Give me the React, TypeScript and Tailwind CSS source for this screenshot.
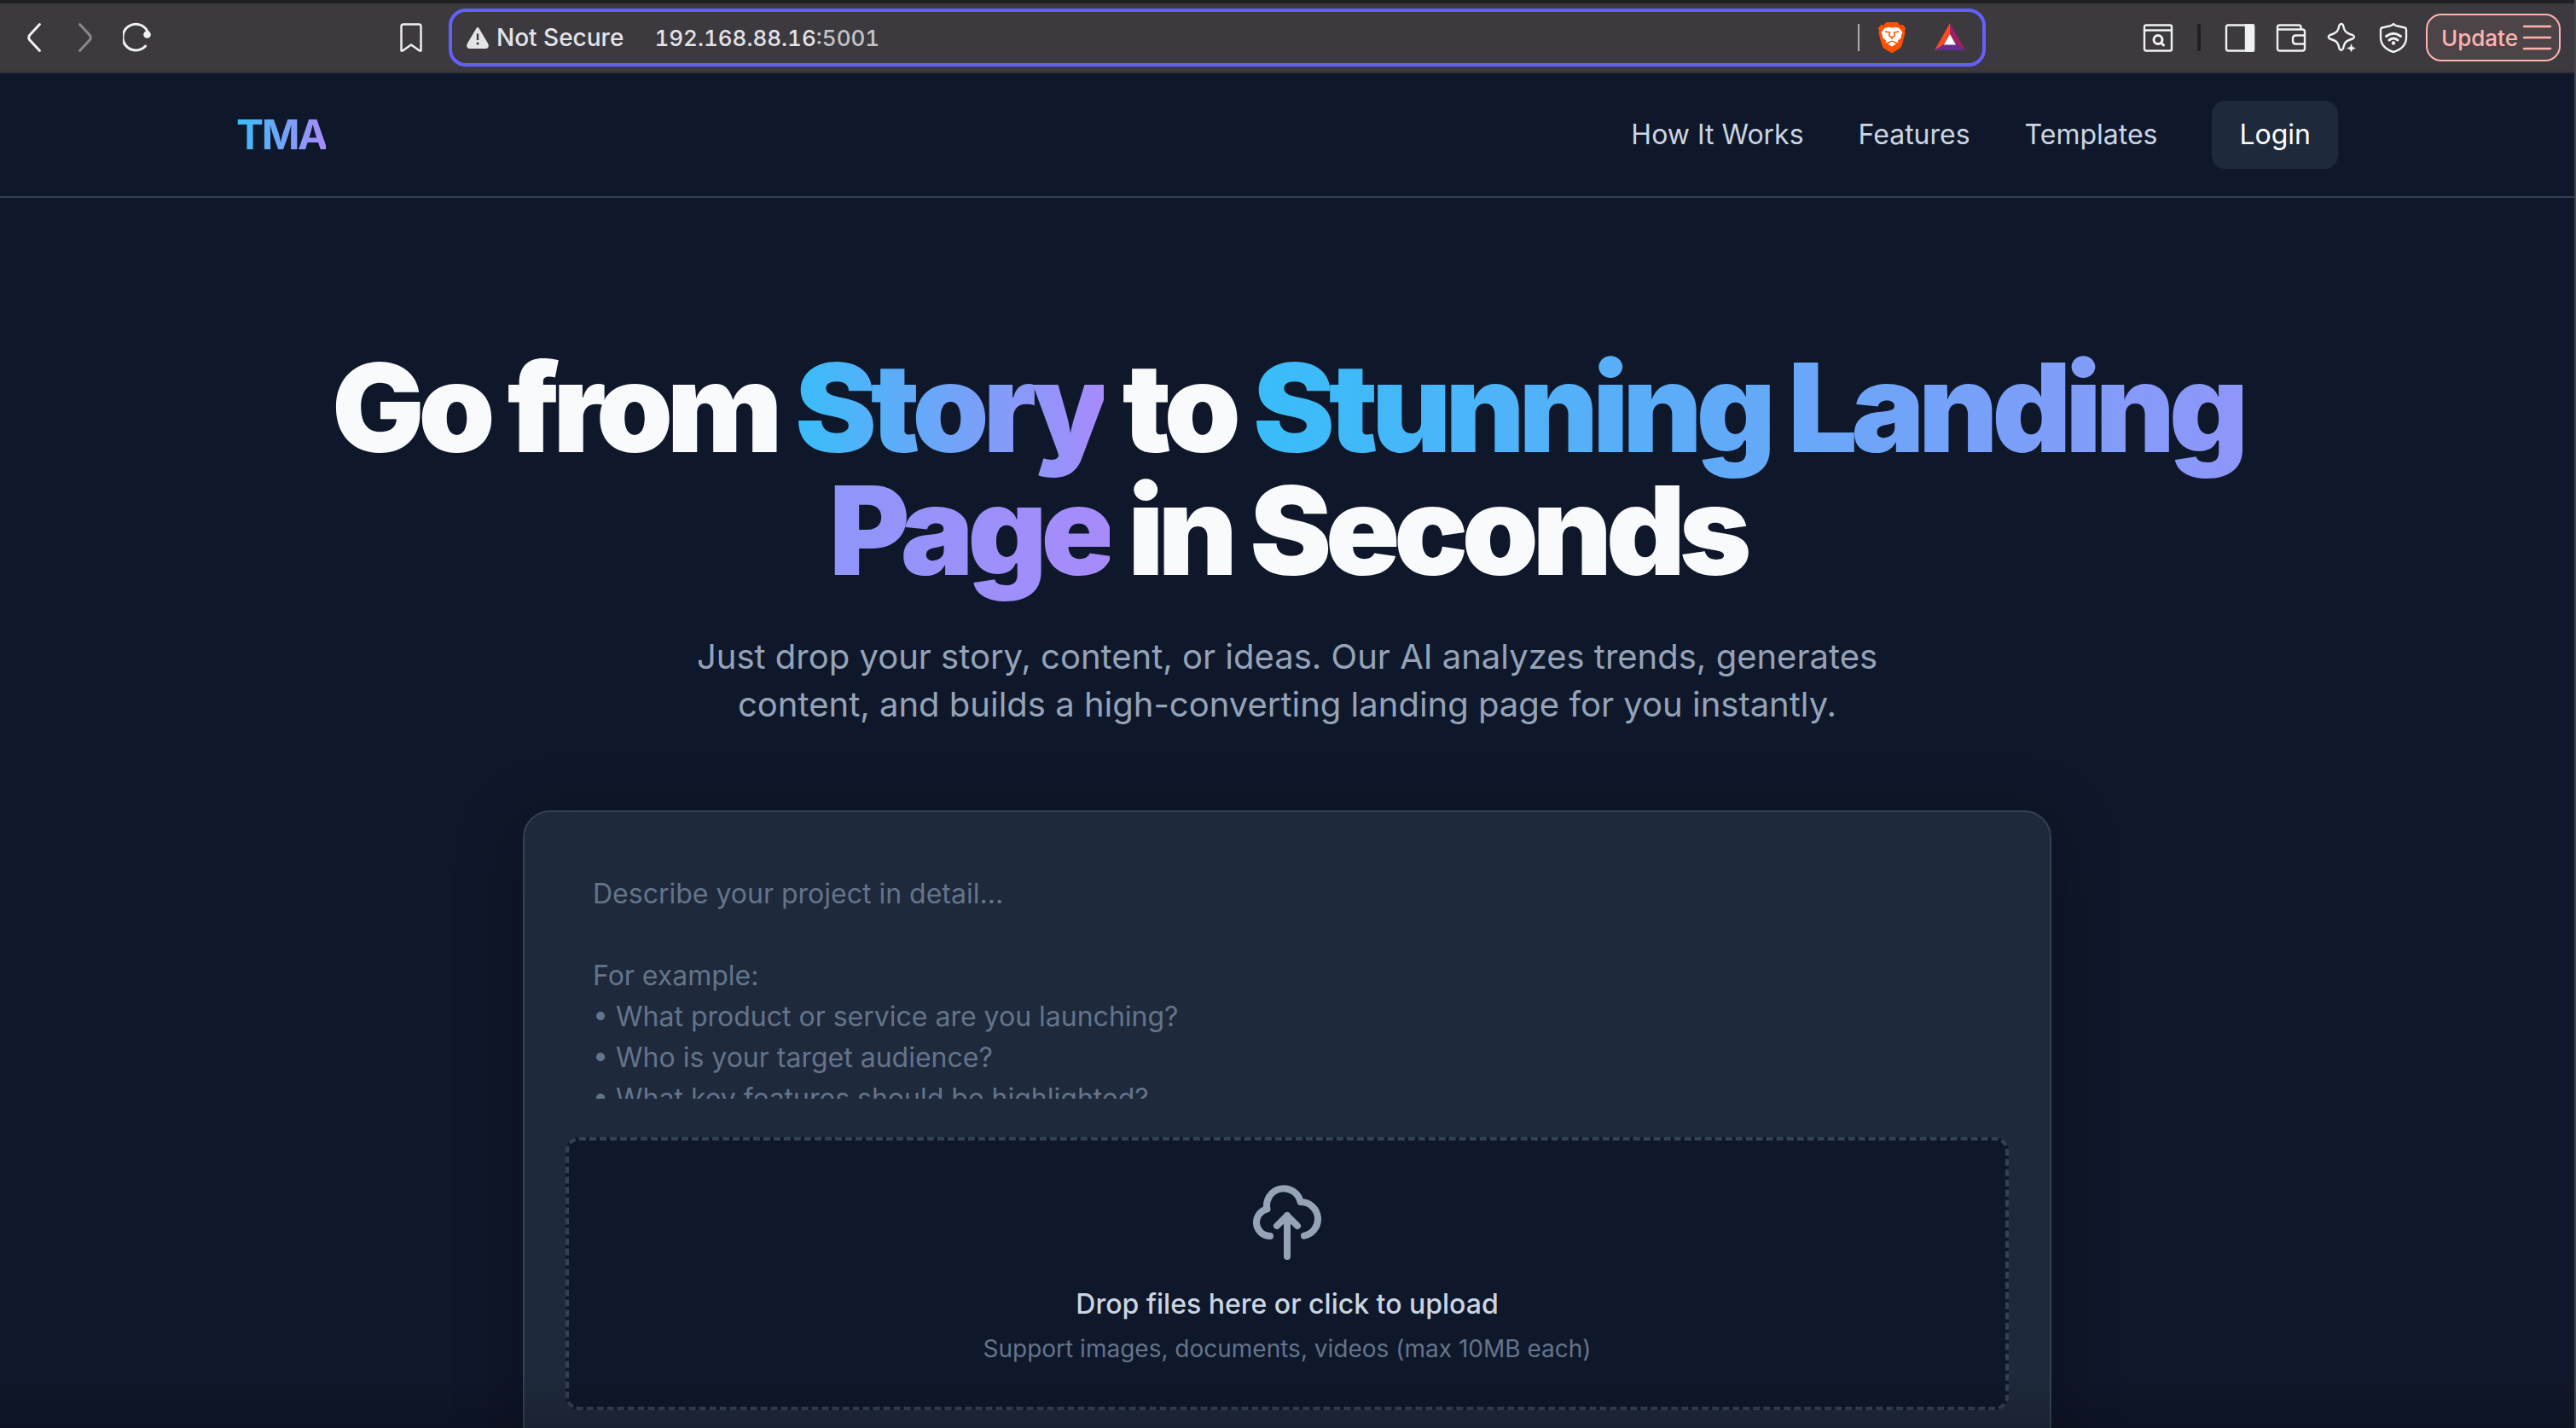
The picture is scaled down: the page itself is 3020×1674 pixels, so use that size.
import type { ReactNode } from "react";

const PLACEHOLDER = [
  "Describe your project in detail...",
  "",
  "For example:",
  "• What product or service are you launching?",
  "• Who is your target audience?",
  "• What key features should be highlighted?",
].join("\n");

function Icon({ children, className = "" }: { children: ReactNode; className?: string }) {
  return (
    <svg
      viewBox="0 0 36 36"
      className={`size-9 shrink-0 ${className}`}
      fill="none"
      stroke="currentColor"
      strokeWidth="2.4"
      strokeLinecap="round"
      strokeLinejoin="round"
      aria-hidden="true"
    >
      {children}
    </svg>
  );
}

function IconButton({ label, children }: { label: string; children: ReactNode }) {
  return (
    <button type="button" aria-label={label} className="flex shrink-0 items-center">
      {children}
    </button>
  );
}

function BrowserBar() {
  return (
    <div className="flex h-[86px] items-center border-t-4 border-b-2 border-t-[#1f1f23] border-b-[#2f2f34] bg-[#3c3a3f] text-[#f1f1f4]">
      <div className="flex w-[526px] shrink-0 items-center justify-between px-6">
        <div className="flex items-center gap-6">
          <IconButton label="Back">
            <Icon>
              <path d="M22.500 2.500 L10.500 15.500 Q9 18 10.500 20.500 L22.500 33.500" strokeWidth="3" />
            </Icon>
          </IconButton>
          <IconButton label="Forward">
            <Icon className="text-[#89888c]">
              <path d="M9.500 2.500 L21.500 15.500 Q23 18 21.500 20.500 L9.500 33.500" strokeWidth="3" />
            </Icon>
          </IconButton>
          <IconButton label="Reload">
            <Icon>
              <path d="M26.500 28 A15.300 15.300 0 1 1 29 11" strokeWidth="3" />
              <circle cx="28.500" cy="14.500" r="4.300" fill="currentColor" stroke="none" />
            </Icon>
          </IconButton>
        </div>
        <IconButton label="Bookmark">
          <Icon>
            <path d="M7 2.500 H25 Q27.500 2.500 27.500 5 V33.500 H26 L16 26.500 L6 33.500 H4.500 V5 Q4.500 2.500 7 2.500 Z" />
          </Icon>
        </IconButton>
      </div>

      <div className="flex h-[68px] w-[1802px] min-w-0 shrink items-center rounded-[20px] border-4 border-[#6360ff] pr-5 pl-4">
        <svg viewBox="0 0 28 28" className="mr-2 size-7 shrink-0" aria-hidden="true">
          <path d="M14 3.500 L25 22 Q26 25.500 23.500 25.500 H4.500 Q2 25.500 3 22 Z" fill="#e3e3e8" stroke="#e3e3e8" strokeWidth="3" strokeLinejoin="round" />
          <path d="M14 9.500 V17" stroke="#3c3a3f" strokeWidth="2.400" />
          <circle cx="14" cy="21" r="1.500" fill="#3c3a3f" />
        </svg>
        <span className="text-[28px] font-medium text-[#e3e3e8]">Not Secure</span>
        <span className="ml-9 flex-1 text-[26px] font-medium text-[#e3e3e8] tabular-nums">
          192.168.88.16<span className="text-[#c4c4c9]">:5001</span>
        </span>
        <span className="h-8 w-0.5 bg-[#a9abae]" />
        <button type="button" aria-label="Brave Shields" className="ml-5 flex size-9 items-center justify-center">
          <svg viewBox="0 0 32 36" className="h-9 w-8" aria-hidden="true">
            <path d="M9.500 0 H22.500 L25.500 3.500 L29 3.200 L32 7 L31 10.500 L31.500 13 L27.500 27.500 Q26.500 30 24 31.500 L17.500 35.500 Q16 36.500 14.500 35.500 L8 31.500 Q5.500 30 4.500 27.500 L0.500 13 L1 10.500 L0 7 L3 3.200 L6.500 3.500 Z" fill="#ff5000" />
            <path d="M16 6.500 L20 5.800 L24.500 7 L28.500 12 L26.800 15.500 L27 18 L22.500 22 L24 24.500 L16 21.500 L8 24.500 L9.500 22 L5 18 L5.200 15.500 L3.500 12 L7.500 7 L12 5.800 Z" fill="#fff" />
            <path d="M8 11 L13.500 12 L12.800 16 L16 18 L19.200 16 L18.500 12 L24 11 M16 18 V20" fill="none" stroke="#ff5000" strokeWidth="1.500" />
            <path d="M16 22.800 L21 25.200 L16 28.800 L11 25.200 Z" fill="#fff" />
          </svg>
        </button>
        <button type="button" aria-label="Rewards" className="ml-8 flex size-9 items-center">
          <svg viewBox="0 0 36 36" className="size-9" aria-hidden="true">
            <path d="M18 1 L0 33 L11 26 L18 14 Z" fill="#ff4724" />
            <path d="M18 1 L36 33 L25 26 L18 14 Z" fill="#9e1f63" />
            <path d="M0 33 H36 L25 26 H11 Z" fill="#662d91" />
            <path d="M18 14 L25 26.500 H11 Z" fill="#fff" />
          </svg>
        </button>
      </div>

      <div className="ml-auto flex shrink-0 items-center pr-4">
        <IconButton label="Search tabs">
          <Icon>
            <rect x="2" y="3.500" width="32" height="30" rx="2" />
            <path d="M2 9.500 H34" />
            <circle cx="18" cy="20.500" r="5" strokeWidth="3" />
            <path d="M22 24.500 L24.500 27" strokeWidth="3" />
          </Icon>
        </IconButton>
        <span className="mr-7 ml-7 h-8 w-1 rounded-sm bg-[#1f1f23]" />
        <div className="flex items-center gap-6">
          <IconButton label="Side panel">
            <Icon>
              <rect x="2" y="3.500" width="32" height="30" rx="2" />
              <path d="M25 3.500 H34 V33.500 H25 Z" fill="currentColor" />
            </Icon>
          </IconButton>
          <IconButton label="Wallet">
            <Icon>
              <path d="M2 8.500 V6 Q2 3.500 4.500 3.500 H27 Q29.500 3.500 29.500 6 V8.500 M2 8.500 H31 Q34 8.500 34 11 V31 Q34 33.500 31 33.500 H5 Q2 33.500 2 31 V8.500" />
              <path d="M34 15.500 H23.500 Q20 15.500 20 19 V22 Q20 25.500 23.500 25.500 H34" />
            </Icon>
          </IconButton>
          <IconButton label="Leo AI">
            <Icon>
              <path d="M14.500 3.500 Q17 0.500 19 3.500 C20.500 11 22 12.500 30 15 Q34 17 30 19.500 C22 22 20.500 23.500 19 31 Q17 34.500 14.500 31 C13 23.500 11.500 22 3.500 19.500 Q0 17 3.500 15 C11.500 12.500 13 11 14.500 3.500 Z" />
              <path d="M28.500 24.500 L30.200 28.800 L34.500 30.500 L30.200 32.200 L28.500 35.500 L26.800 32.200 L22.500 30.500 L26.800 28.800 Z" fill="currentColor" stroke="#3c3a3f" strokeWidth="0.500" />
            </Icon>
          </IconButton>
          <IconButton label="VPN">
            <Icon>
              <path d="M18 2 Q20 4.500 25 5 L31.500 6.500 Q33 7 33 9 V18 C33 26 27 32 18 35 C9 32 3 26 3 18 V9 Q3 7 4.500 6.500 L11 5 Q16 4.500 18 2 Z" />
              <path d="M9.500 16.500 Q18 10 26.500 16.500 M13 21 Q18 17 23 21" strokeWidth="3" />
              <circle cx="18" cy="24.500" r="2.200" fill="currentColor" stroke="none" />
            </Icon>
          </IconButton>
        </div>
        <button
          type="button"
          className="ml-5 flex h-14 items-center gap-1 rounded-[18px] border-2 border-[#ffb3ae] bg-[#4d4448] pr-2 pl-4 text-[26px] font-medium text-[#ffb3ae]"
        >
          Update
          <Icon>
            <path d="M3 5 H34 M3 18 H34 M3 31 H34" />
          </Icon>
        </button>
      </div>
    </div>
  );
}

const GRADIENT = "bg-[linear-gradient(to_right,#38bdf8,#a78bfa)] bg-clip-text text-transparent";
const NAV = ["How It Works", "Features", "Templates"];

function SiteHeader() {
  return (
    <header className="border-b-2 border-[#334155]">
      <div className="mx-auto flex max-w-[2560px] items-center justify-between px-12 py-8">
        <a href="#top" className={`text-[48px] leading-[64px] font-bold tracking-tighter ${GRADIENT}`}>
          TMA
        </a>
        <nav className="flex items-center gap-16 text-[32px] leading-[48px] text-[#cbd5e1]">
          {NAV.map((item) => (
            <a key={item} href="#top">
              {item}
            </a>
          ))}
          <button type="button" className="rounded-2xl bg-[#1e293b] px-8 py-4 text-white">
            Login
          </button>
        </nav>
      </div>
    </header>
  );
}

function Hero() {
  return (
    <section className="mx-auto max-w-[2560px] px-12 pt-[174px] text-center">
      <h1 className="mx-auto max-w-[2304px] text-[144px] leading-[144px] font-black tracking-tighter text-[#f8fafc]">
        Go from <span className={GRADIENT}>Story</span> to <span className={GRADIENT}>Stunning Landing Page</span> in Seconds
      </h1>
      <p className="mx-auto mt-12 max-w-[1536px] text-[40px] leading-[56px] text-[#94a3b8]">
        Just drop your story, content, or ideas. Our AI analyzes trends, generates content, and builds a high-converting landing page for you instantly.
      </p>
    </section>
  );
}

function ProjectForm() {
  return (
    <form className="mx-auto mt-24 max-w-[1792px] rounded-[32px] border-2 border-[#334155] bg-[#1e293b] p-12 shadow-[0_16px_80px_rgba(0,0,0,0.3)]">
      <textarea
        aria-label="Project description"
        placeholder={PLACEHOLDER}
        className="block h-72 w-full resize-none overflow-hidden bg-transparent px-8 pt-6 text-[32px] leading-[48px] text-slate-200 outline-none placeholder:text-[#64748b]"
      />
      <label className="mt-[45px] flex cursor-pointer flex-col items-center rounded-2xl border-4 border-dashed border-[#334155] bg-[#0f172a] p-12">
        <input type="file" multiple className="sr-only" />
        <svg viewBox="0 0 24 24" className="size-24 text-[#94a3b8]" fill="none" stroke="currentColor" strokeWidth="2" strokeLinecap="round" strokeLinejoin="round" aria-hidden="true">
          <path d="M7 16a4 4 0 01-.88-7.903A5 5 0 1115.9 6L16 6a5 5 0 011 9.9M15 13l-3-3m0 0l-3 3m3-3v12" />
        </svg>
        <span className="mt-6 text-[32px] leading-[48px] font-medium text-[#cbd5e1]">Drop files here or click to upload</span>
        <span className="mt-2 text-[28px] leading-[40px] text-[#64748b]">Support images, documents, videos (max 10MB each)</span>
      </label>
    </form>
  );
}

export default function App() {
  return (
    <div className="relative h-screen overflow-hidden border-r-2 border-[#45454d] bg-[#0f172a] font-['Inter',sans-serif]">
      <BrowserBar />
      <SiteHeader />
      <main>
        <Hero />
        <ProjectForm />
      </main>
      <div className="pointer-events-none absolute inset-x-0 bottom-0 h-16 bg-[linear-gradient(to_top,rgba(0,0,0,0.16),transparent)]" />
    </div>
  );
}
